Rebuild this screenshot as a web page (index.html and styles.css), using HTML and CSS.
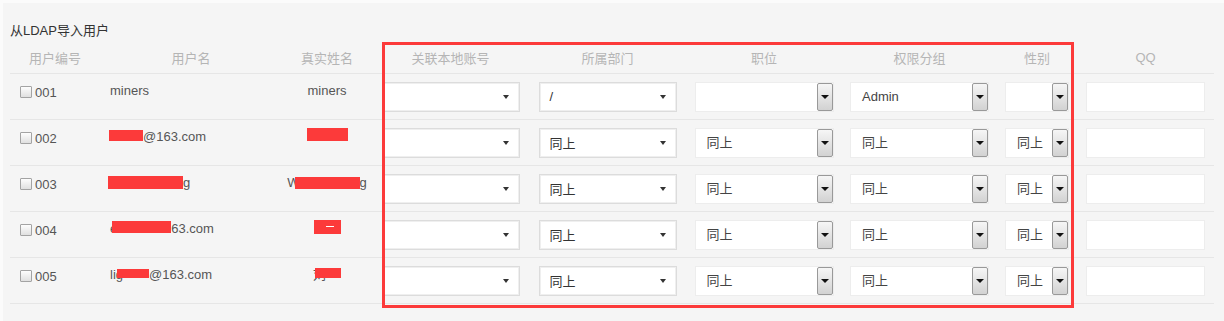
FILE: index.html
```html
<!DOCTYPE html>
<html lang="zh-CN">
<head>
    <meta charset="UTF-8">
    <meta name="viewport" content="width=device-width, initial-scale=1.0">
    <title>从LDAP导入用户</title>
    <link rel="stylesheet" href="styles.css">
</head>
<body>
    <div class="panel">
        <div class="panel-title">从LDAP导入用户</div>

        <div class="ldap-list">
            <!-- Заголовок -->
            <div class="ldap-row ldap-head">
                <div>用户编号</div>
                <div>用户名</div>
                <div>真实姓名</div>
                <div>关联本地账号</div>
                <div>所属部门</div>
                <div>职位</div>
                <div>权限分组</div>
                <div>性别</div>
                <div>QQ</div>
            </div>

            <div class="ldap-row">
                <div class="cell-num"><input type="checkbox" class="check">001</div>
                <div class="cell-name">miners</div>
                <div class="cell-real">miners</div>
                <div class="cell-ctl"><div class="pick"><span></span></div></div>
                <div class="cell-ctl"><div class="pick"><span>/</span></div></div>
                <div class="cell-ctl"><div class="combo"><span class="combo-text"></span><span class="combo-btn"></span></div></div>
                <div class="cell-ctl"><div class="combo"><span class="combo-text">Admin</span><span class="combo-btn"></span></div></div>
                <div class="cell-ctl"><div class="combo combo-small"><span class="combo-text"></span><span class="combo-btn"></span></div></div>
                <div class="cell-ctl"><div class="qq"></div></div>
            </div>

            <div class="ldap-row">
                <div class="cell-num"><input type="checkbox" class="check">002</div>
                <div class="cell-name"><span class="redact r-a"></span>@163.com</div>
                <div class="cell-real"><span class="redact r-b"></span></div>
                <div class="cell-ctl"><div class="pick"><span></span></div></div>
                <div class="cell-ctl"><div class="pick"><span>同上</span></div></div>
                <div class="cell-ctl"><div class="combo"><span class="combo-text">同上</span><span class="combo-btn"></span></div></div>
                <div class="cell-ctl"><div class="combo"><span class="combo-text">同上</span><span class="combo-btn"></span></div></div>
                <div class="cell-ctl"><div class="combo combo-small"><span class="combo-text">同上</span><span class="combo-btn"></span></div></div>
                <div class="cell-ctl"><div class="qq"></div></div>
            </div>

            <div class="ldap-row">
                <div class="cell-num"><input type="checkbox" class="check">003</div>
                <div class="cell-name"><span class="redact r-c"></span>g</div>
                <div class="cell-real">W<span class="redact r-d"></span>g</div>
                <div class="cell-ctl"><div class="pick"><span></span></div></div>
                <div class="cell-ctl"><div class="pick"><span>同上</span></div></div>
                <div class="cell-ctl"><div class="combo"><span class="combo-text">同上</span><span class="combo-btn"></span></div></div>
                <div class="cell-ctl"><div class="combo"><span class="combo-text">同上</span><span class="combo-btn"></span></div></div>
                <div class="cell-ctl"><div class="combo combo-small"><span class="combo-text">同上</span><span class="combo-btn"></span></div></div>
                <div class="cell-ctl"><div class="qq"></div></div>
            </div>

            <div class="ldap-row">
                <div class="cell-num"><input type="checkbox" class="check">004</div>
                <div class="cell-name">e<span class="redact r-e"></span>63.com</div>
                <div class="cell-real"><span class="redact r-f"></span></div>
                <div class="cell-ctl"><div class="pick"><span></span></div></div>
                <div class="cell-ctl"><div class="pick"><span>同上</span></div></div>
                <div class="cell-ctl"><div class="combo"><span class="combo-text">同上</span><span class="combo-btn"></span></div></div>
                <div class="cell-ctl"><div class="combo"><span class="combo-text">同上</span><span class="combo-btn"></span></div></div>
                <div class="cell-ctl"><div class="combo combo-small"><span class="combo-text">同上</span><span class="combo-btn"></span></div></div>
                <div class="cell-ctl"><div class="qq"></div></div>
            </div>

            <div class="ldap-row">
                <div class="cell-num"><input type="checkbox" class="check">005</div>
                <div class="cell-name">lig<span class="redact r-g"></span>@163.com</div>
                <div class="cell-real">刘<span class="redact r-h"></span></div>
                <div class="cell-ctl"><div class="pick"><span></span></div></div>
                <div class="cell-ctl"><div class="pick"><span>同上</span></div></div>
                <div class="cell-ctl"><div class="combo"><span class="combo-text">同上</span><span class="combo-btn"></span></div></div>
                <div class="cell-ctl"><div class="combo"><span class="combo-text">同上</span><span class="combo-btn"></span></div></div>
                <div class="cell-ctl"><div class="combo combo-small"><span class="combo-text">同上</span><span class="combo-btn"></span></div></div>
                <div class="cell-ctl"><div class="qq"></div></div>
            </div>
        </div>

        <!-- Красная рамка поверх колонок -->
        <div class="mark-frame"></div>
    </div>
</body>
</html>
```

FILE: styles.css
```css
/* Основные стили */
body {
    margin: 0;
    background-color: #fbfbfb;
    font-family: "Liberation Sans", "Noto Sans CJK SC", sans-serif;
    font-size: 13px;
    color: #555;
}

.panel {
    position: relative;
    margin: 3px 0 0 3px;
    padding: 18px 7px 0 7px;
    height: 318px;
    box-sizing: border-box;
    background-color: #f5f5f5;
}

.panel-title {
    line-height: 20px;
    color: #333;
}

/* Таблица */
.ldap-row {
    display: grid;
    grid-template-columns: 90px 182px 90px 157px 157px 156px 155px 80px 137px;
    width: 1204px;
    height: 46px;
    box-sizing: border-box;
    border-bottom: 1px solid #e6e6e6;
    align-items: center;
}

.ldap-head {
    height: 33px;
    color: #b5b5b5;
    text-align: center;
}

.cell-num,
.cell-name,
.cell-real {
    align-self: start;
    line-height: 18px;
    white-space: nowrap;
}

.cell-num {
    padding: 10px 0 0 10px;
}

.cell-name {
    padding: 8px 0 0 10px;
}

.cell-real {
    padding-top: 8px;
    text-align: center;
}

.check {
    appearance: none;
    -webkit-appearance: none;
    display: inline-block;
    width: 12px;
    height: 12px;
    margin: 0 3px 0 0;
    box-sizing: border-box;
    border: 1px solid #a3a3a3;
    border-radius: 1px;
    background: linear-gradient(#fdfdfd, #e0e0e0);
    vertical-align: -1px;
}

/* Скрытые данные */
.redact {
    display: inline-block;
    background-color: #fc3a3a;
    vertical-align: 0;
}

.r-a { width: 34px; height: 11px; margin-left: -1px; }
.r-b { width: 41px; height: 13px; }
.r-c { width: 75px; height: 13px; margin-left: -2px; vertical-align: -2px; }
.r-d { width: 65px; height: 12px; margin-left: -5px; vertical-align: -2px; }
.r-e { width: 59px; height: 12px; margin-left: -5px; }
.r-f { width: 27px; height: 14px; vertical-align: 1px; position: relative; }
.r-g { width: 32px; height: 9px; margin-left: -6px; vertical-align: 1px; }
.r-h { width: 26px; height: 10px; margin-left: -11px; vertical-align: 1px; }

.r-f::after {
    content: "";
    position: absolute;
    left: 12px;
    top: 6px;
    width: 8px;
    height: 1px;
    background-color: #fff;
}

/* Выпадающие списки */
.cell-ctl {
    display: flex;
    justify-content: center;
}

.pick {
    display: flex;
    align-items: center;
    justify-content: space-between;
    width: 138px;
    height: 30px;
    box-sizing: border-box;
    padding: 0 10px;
    background-color: #fff;
    border: 1px solid #dcdcdc;
    box-shadow: inset 0 0 0 1px #efefef;
    color: #333;
}

.pick::after {
    content: "";
    border-left: 3px solid transparent;
    border-right: 3px solid transparent;
    border-top: 4px solid #333;
}

.combo {
    display: flex;
    width: 137px;
    height: 28px;
    background-color: #fff;
    box-shadow: 0 0 0 1px #ededed;
}

.combo-small {
    width: 62px;
}

.combo-text {
    flex: 1;
    padding-left: 11px;
    line-height: 28px;
    color: #444;
}

.combo-btn {
    display: flex;
    align-items: center;
    justify-content: center;
    width: 16px;
    box-sizing: border-box;
    border: 1px solid #999;
    border-radius: 2px;
    background: linear-gradient(#f6f6f6, #d2d2d2);
}

.combo-btn::after {
    content: "";
    border-left: 4px solid transparent;
    border-right: 4px solid transparent;
    border-top: 4px solid #111;
}

.qq {
    width: 117px;
    height: 28px;
    background-color: #fff;
    box-shadow: 0 0 0 1px #ededed;
}

/* Красная рамка */
.mark-frame {
    position: absolute;
    left: 379px;
    top: 39px;
    width: 692px;
    height: 266px;
    box-sizing: border-box;
    border: 3px solid #fc3a3a;
    pointer-events: none;
}
```
